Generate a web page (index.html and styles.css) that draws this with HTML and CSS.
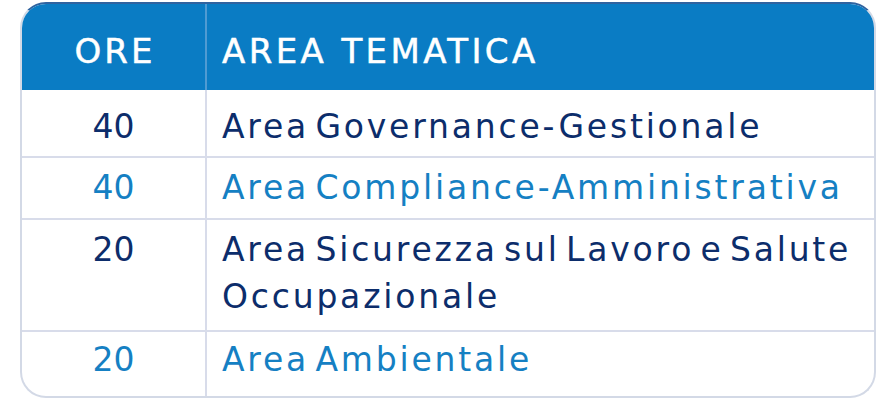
FILE: index.html
```html
<!DOCTYPE html>
<html lang="it">
<head>
<meta charset="utf-8">
<title>Ore - Area Tematica</title>
<link rel="stylesheet" href="styles.css">
</head>
<body>
<div class="card">
  <div class="row head">
    <div class="c1">ORE</div>
    <div class="c2">AREA TEMATICA</div>
  </div>
  <div class="row r1 dark">
    <div class="c1 num">40</div>
    <div class="c2">Area Governance-Gestionale</div>
  </div>
  <div class="row r2 light">
    <div class="c1 num">40</div>
    <div class="c2">Area Compliance-Amministrativa</div>
  </div>
  <div class="row r3 dark">
    <div class="c1 num">20</div>
    <div class="c2">Area Sicurezza sul Lavoro e Salute<br>Occupazionale</div>
  </div>
  <div class="row r4 light last">
    <div class="c1 num">20</div>
    <div class="c2">Area Ambientale</div>
  </div>
</div>
</body>
</html>
```
FILE: styles.css
```css
html, body {
  margin: 0;
  padding: 0;
  background: #ffffff;
}
body {
  padding: 2px 3px 0 20px;
}
.card {
  width: 856px;
  height: 396px;
  box-sizing: border-box;
  border: 2px solid #d3d9e6;
  border-top-color: #2f63a0;
  border-radius: 26px;
  overflow: hidden;
  background: #ffffff;
}
.row {
  display: grid;
  grid-template-columns: 185px 1fr;
  border-bottom: 2px solid #d8dcea;
}
.row.last {
  border-bottom: none;
}
.c1 {
  border-right: 2px solid #d8dcea;
  text-align: center;
}
.c2 {
  padding-left: 15px;
  white-space: nowrap;
}
.head {
  background: #0a7cc4;
  border-bottom: none;
  height: 86px;
  color: #ffffff;
  font-family: "DejaVu Sans", sans-serif;
  font-size: 34px;
  letter-spacing: 3px;
  -webkit-text-stroke: 0.5px #ffffff;
}
.head .c1, .head .c2 {
  padding-top: 24px;
  line-height: 47px;
}
.head .c1 {
  border-right: 2px solid #4f9bd3;
  padding-left: 3px;
}
.dark { color: #0c2d6b; }
.light { color: #1580c3; }
.row .c2 {
  font-family: "DejaVu Sans", sans-serif;
  font-size: 33px;
  letter-spacing: 2.8px;
  word-spacing: -7px;
  line-height: 47px;
}
.head .c2 { font-size: 34px; letter-spacing: 3.4px; word-spacing: 0; }
.num {
  font-family: "DejaVu Sans", sans-serif;
  font-size: 33px;
  line-height: 47px;
}
.r1 .c1, .r1 .c2 { padding-top: 13px; padding-bottom: 6px; }
.r2 .c1, .r2 .c2 { padding-top: 6px; padding-bottom: 7px; }
.r3 .c1, .r3 .c2 { padding-top: 6px; padding-bottom: 10px; }
.r4 { height: 100%; }
.r4 .c1, .r4 .c2 { padding-top: 4px; padding-bottom: 12px; }
```
